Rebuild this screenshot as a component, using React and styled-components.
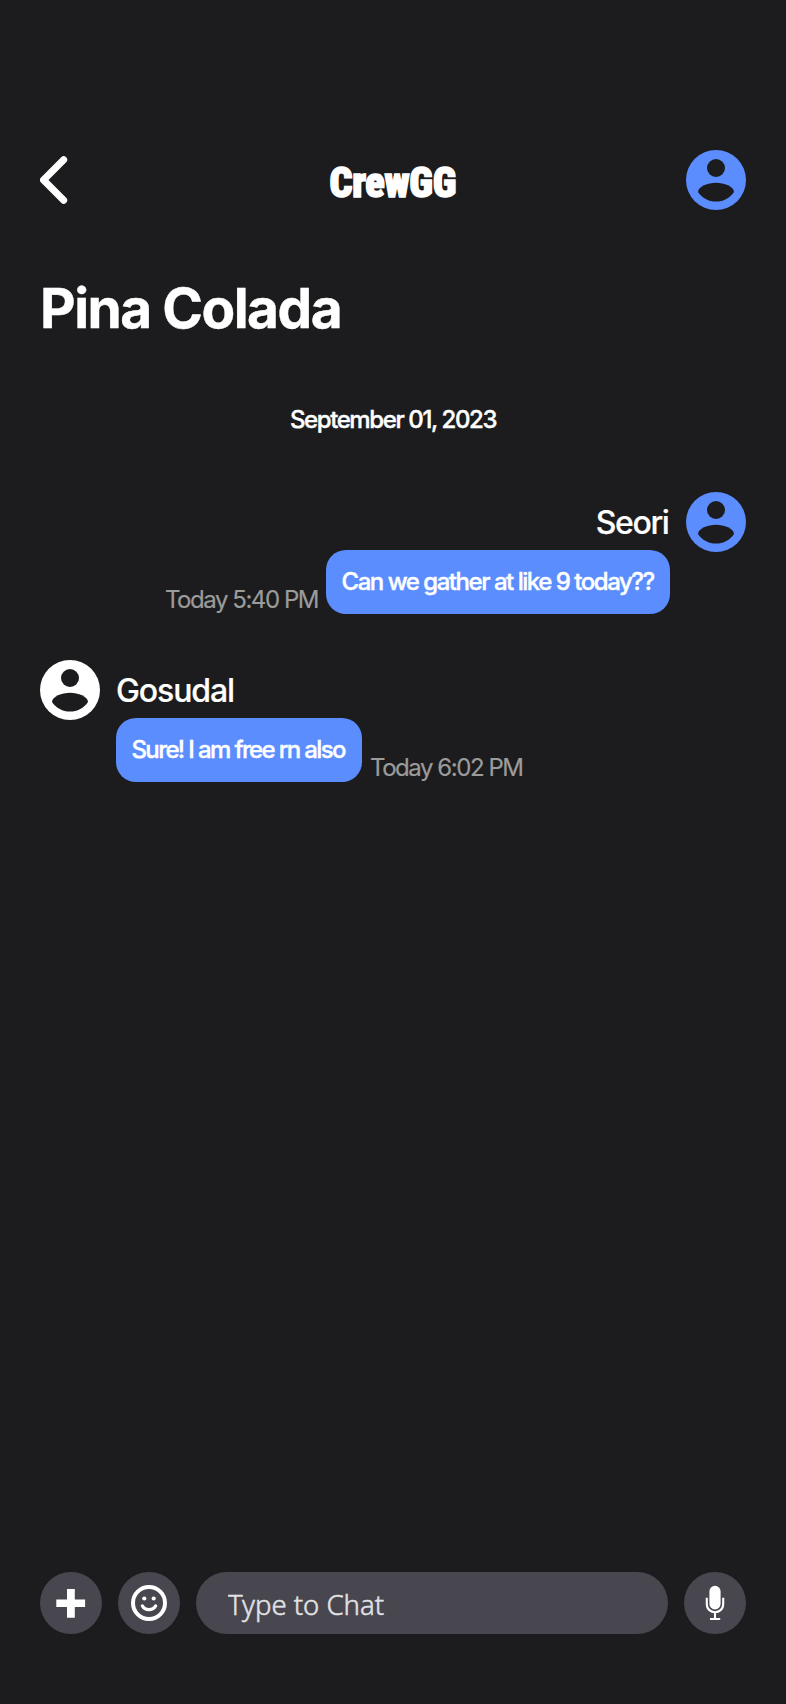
import React from "react";
import styled, { createGlobalStyle } from "styled-components";

const Global = createGlobalStyle`
  * { box-sizing: border-box; }
  body { margin: 0; background: #1c1c1e; }
  button, input { font: inherit; border: 0; padding: 0; margin: 0; }
`;

const Screen = styled.main`
  display: flex;
  flex-direction: column;
  width: 786px;
  height: 1704px;
  padding: 150px 40px 70px;
  background: #1c1c1e;
  color: #fff;
  font-family: Inter, "Liberation Sans", sans-serif;
`;

const Header = styled.header`
  display: flex;
  align-items: center;
  justify-content: space-between;
  height: 60px;
`;

const BackButton = styled.button`
  display: flex;
  width: 60px;
  height: 60px;
  align-items: center;
  background: none;
`;

const Logo = styled.div`
  font: 900 43px/60px Roboto, sans-serif;
  font-stretch: 75%;
  letter-spacing: -0.3px;
  padding-top: 3px;
  -webkit-text-stroke: 1.6px #fff;
  transform: scaleX(0.935);
`;

const Title = styled.h1`
  margin: 68px 0 0;
  font-size: 55px;
  font-weight: 700;
  line-height: 60px;
  letter-spacing: -1.5px;
  -webkit-text-stroke: 0.4px #fff;
`;

const DateLabel = styled.div`
  margin-top: 66px;
  text-align: center;
  font-size: 24px;
  font-weight: 500;
  line-height: 32px;
  height: 30px;
  letter-spacing: -1.4px;
  -webkit-text-stroke: 0.4px #fff;
`;

const Messages = styled.section`
  display: flex;
  flex-direction: column;
  flex: 1;
  gap: 46px;
  padding-top: 58px;
`;

const Message = styled.article`
  display: flex;
  flex-direction: ${(p) => (p.$own ? "row-reverse" : "row")};
  gap: 16px;
`;

const MessageBody = styled.div`
  display: flex;
  flex-direction: column;
  align-items: ${(p) => (p.$own ? "flex-end" : "flex-start")};
`;

const Author = styled.div`
  height: 58px;
  padding-right: ${(p) => (p.$own ? "1.5px" : "0")};
  font-size: 32px;
  font-weight: 500;
  line-height: 61px;
  letter-spacing: ${(p) => (p.$own ? "-1.4px" : "-1.1px")};
  -webkit-text-stroke: 0.2px #fff;
`;

const BubbleRow = styled.div`
  display: flex;
  flex-direction: ${(p) => (p.$own ? "row-reverse" : "row")};
  align-items: flex-end;
  gap: 8px;
`;

const Bubble = styled.div`
  width: ${(p) => p.$width}px;
  height: 64px;
  padding-left: 15.5px;
  border-radius: 20px;
  background: #5b8dff;
  font-size: 24px;
  font-weight: 500;
  line-height: 64px;
  letter-spacing: ${(p) => p.$tracking}px;
  -webkit-text-stroke: 0.4px #fff;
  white-space: nowrap;
`;

const Time = styled.time`
  height: 30px;
  color: #9b9b9b;
  font-size: 24px;
  line-height: 32px;
  letter-spacing: -1.45px;
  -webkit-text-stroke: 0.2px #9b9b9b;
`;

const Composer = styled.footer`
  display: flex;
  gap: 16px;
  height: 62px;
`;

const RoundButton = styled.button`
  display: flex;
  flex: none;
  width: 62px;
  height: 62px;
  border-radius: 50%;
  background: #48474f;
`;

const Field = styled.input`
  flex: 1;
  min-width: 0;
  height: 62px;
  padding: 2px 32px 0;
  border-radius: 31px;
  background: #48474f;
  font: 300 27.5px "Noto Sans", sans-serif;
  letter-spacing: 0;
  outline: none;
  &::placeholder {
    color: #e2e2e5;
    opacity: 1;
    -webkit-text-stroke: 0.5px #e2e2e5;
  }
`;

const AvatarSvg = styled.svg`
  flex: none;
  width: 60px;
  height: 60px;
`;

const AvatarIcon = ({ color }) => (
  <AvatarSvg viewBox="0 0 60 60" aria-hidden="true">
    <circle cx="30" cy="30" r="30" fill={color} />
    <circle cx="30" cy="18" r="9" fill="#1c1c1e" />
    <path d="M12 42C12 36.5 22 32.7 30 32.7S48 36.5 48 42C44 48 37.3 51.6 30 51.6S16 48 12 42Z" fill="#1c1c1e" />
  </AvatarSvg>
);

const messages = [
  { own: true, author: "Seori", text: "Can we gather at like 9 today??", time: "Today 5:40 PM", color: "#5b8dff", width: 344, tracking: -1.47 },
  { own: false, author: "Gosudal", text: "Sure! I am free rn also", time: "Today 6:02 PM", color: "#fff", width: 246, tracking: -1.63 },
];

export default function App() {
  return (
    <Screen>
      <Global />
      <Header>
        <BackButton aria-label="Back">
          <svg width="28" height="48" viewBox="0 0 28 48" fill="none">
            <path d="M23.7 3.8L3.5 24L23.7 44.2" stroke="#fff" strokeWidth="7" strokeLinecap="round" strokeLinejoin="round" />
          </svg>
        </BackButton>
        <Logo>CrewGG</Logo>
        <AvatarIcon color="#5b8dff" />
      </Header>
      <Title>Pina Colada</Title>
      <DateLabel>September 01, 2023</DateLabel>
      <Messages>
        {messages.map((m) => (
          <Message key={m.author} $own={m.own}>
            <AvatarIcon color={m.color} />
            <MessageBody $own={m.own}>
              <Author $own={m.own}>{m.author}</Author>
              <BubbleRow $own={m.own}>
                <Bubble $width={m.width} $tracking={m.tracking}>{m.text}</Bubble>
                <Time>{m.time}</Time>
              </BubbleRow>
            </MessageBody>
          </Message>
        ))}
      </Messages>
      <Composer>
        <RoundButton aria-label="Add">
          <svg width="62" height="62" viewBox="0 0 62 62">
            <path d="M27 17h7.8v10.5h10.3v7.5H34.8v10.7H27V35H16.3v-7.5H27Z" fill="#fff" />
          </svg>
        </RoundButton>
        <RoundButton aria-label="Emoji">
          <svg width="62" height="62" viewBox="0 0 62 62" fill="none">
            <circle cx="31" cy="31" r="16" stroke="#fff" strokeWidth="4" />
            <circle cx="26.3" cy="26.5" r="2.1" fill="#fff" />
            <circle cx="35.7" cy="26.5" r="2.1" fill="#fff" />
            <path d="M24.3 33.8C27 39 35 39 37.7 33.8" stroke="#fff" strokeWidth="3.2" strokeLinecap="round" />
          </svg>
        </RoundButton>
        <Field placeholder="Type to Chat" />
        <RoundButton aria-label="Record">
          <svg width="62" height="62" viewBox="0 0 62 62" fill="none">
            <rect x="25.4" y="13.8" width="11.2" height="23.6" rx="5.6" fill="#fff" />
            <path d="M22.8 25.8v6.2c0 10.9 16.4 10.9 16.4 0v-6.2M31 40v7M26 47h10.2" stroke="#fff" strokeWidth="2.1" />
          </svg>
        </RoundButton>
      </Composer>
    </Screen>
  );
}
